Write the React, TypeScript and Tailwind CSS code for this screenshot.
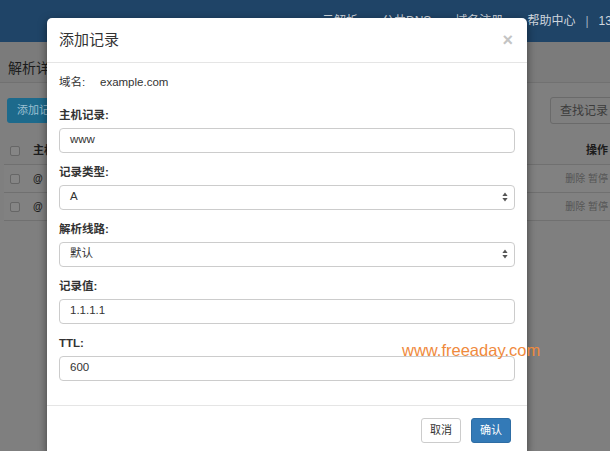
import React from "react";

const fields = [
  { label: "主机记录:", value: "www", select: false },
  { label: "记录类型:", value: "A", select: true },
  { label: "解析线路:", value: "默认", select: true },
  { label: "记录值:", value: "1.1.1.1", select: false },
  { label: "TTL:", value: "600", select: false },
];

function SelectArrows() {
  return (
    <svg width="6" height="10" viewBox="0 0 6 10" className="text-[#555]">
      <path d="M3 0.5 L5.6 4 L0.4 4 Z" fill="currentColor" />
      <path d="M3 9.5 L5.6 6 L0.4 6 Z" fill="currentColor" />
    </svg>
  );
}

function Checkbox() {
  return <span className="block w-[10px] h-[10px] rounded-[2px] border border-[#666] bg-[#858585]" />;
}

/* ===== Page behind the dialog (already dimmed) ===== */
function Page() {
  return (
    <div className="w-[610px] h-[451px] bg-[#7f7f7f]">
      <nav className="h-[42px] bg-[#1f4467] flex items-center pl-[322px] gap-[24px] text-[12px] text-[#cfd6de] whitespace-nowrap overflow-hidden">
        <span>云解析</span>
        <span>公共DNS</span>
        <span>域名注册</span>
        <span className="flex items-center">
          帮助中心
          <span className="ml-[10px] mr-[10px] text-[#9fb0c2]">|</span>
          13800138000
        </span>
      </nav>

      <div className="h-[41px] bg-[#7b7b7b] border-b border-[#717171] flex items-center pt-[12px] px-2 text-[14px] text-[#1c1c1c]">
        解析详情
      </div>

      <div className="flex items-center justify-between mt-[14px] pl-[7px]">
        <button className="h-[25px] px-[10px] rounded-[3px] bg-[#1d6a8c] text-[11px] text-[#9cc0d2]">添加记录</button>
        <button className="h-[27px] pl-[9px] pr-[14px] -mr-[13px] rounded-[3px] border border-[#6a6a6a] text-[12px] text-[#3c3c3c]">查找记录</button>
      </div>

      <div className="mt-[13px] ml-[4px] text-[#1c1c1c]">
        <div className="h-[28px] flex items-center border-b border-[#707070] pl-[6px] pr-[2px] text-[11px] font-bold">
          <Checkbox />
          <span className="ml-[13px]">主机</span>
          <span className="ml-auto">操作</span>
        </div>
        {[0, 1].map((r) => (
          <div key={r} className="h-[28px] flex items-center border-b border-[#707070] bg-[#818181] pl-[6px] pr-[2px] text-[10px]">
            <Checkbox />
            <span className="ml-[13px] font-bold">@</span>
            <span className="ml-auto text-[#555]">删除 暂停</span>
          </div>
        ))}
      </div>
    </div>
  );
}

export default function App() {
  return (
    <div className="relative w-[610px] h-[451px] overflow-hidden font-['Liberation_Sans','Noto_Sans_CJK_SC',sans-serif]">
      <Page />

      {/* Dialog */}
      <div className="absolute left-[47px] top-[18px] w-[480px] bg-white rounded-[5px] shadow-[0_3px_9px_rgba(0,0,0,0.5)]">
        <div className="h-[45px] flex items-center justify-between pl-[12px] pr-[14px] border-b border-[#e5e5e5]">
          <h4 className="text-[15px] text-[#333]">添加记录</h4>
          <span className="text-[18px] font-bold leading-none text-[#c4c4c4]">×</span>
        </div>

        <div className="px-[12px] pt-[12px] pb-[12px] text-[11.5px] text-[#333]">
          <div className="h-[16px] flex items-center mb-[16.5px]">
            <span className="w-[41px]">域名:</span>
            <span>example.com</span>
          </div>

          {fields.map((f) => (
            <div key={f.label} className="mb-[12px]">
              <label className="block leading-[15px] mb-[5px] font-bold">{f.label}</label>
              <div className="h-[25px] flex items-center justify-between rounded-[4px] border border-[#ccc] pl-[10px] pr-[6px] bg-white">
                <span>{f.value}</span>
                {f.select && <SelectArrows />}
              </div>
            </div>
          ))}
        </div>

        <div className="border-t border-[#e5e5e5] flex justify-end gap-[10px] pt-[12px] pb-[12px] pr-[16px] text-[11px]">
          <button className="w-[40px] h-[25px] rounded-[3px] border border-[#ccc] bg-white text-[#333]">取消</button>
          <button className="w-[40px] h-[25px] rounded-[3px] border border-[#2e6da4] bg-[#337ab7] text-white">确认</button>
        </div>
      </div>

      {/* Watermark */}
      <span className="absolute left-[402px] top-[342px] text-[16.5px] leading-[16px] text-[#ef8a3d]">www.freeaday.com</span>
    </div>
  );
}
